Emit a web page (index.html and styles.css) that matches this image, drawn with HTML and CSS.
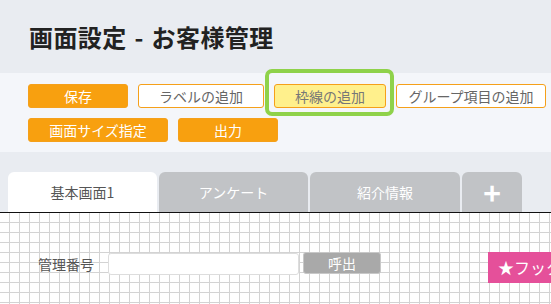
FILE: index.html
```html
<!DOCTYPE html>
<html lang="ja">
<head>
<meta charset="utf-8">
<title>画面設定 - お客様管理</title>
<link rel="stylesheet" href="styles.css">
</head>
<body>
<div class="page">
  <header class="title-bar">
    <h1 class="title">画面設定 - お客様管理</h1>
  </header>
  <section class="toolbar">
    <div class="btn-row">
      <button class="btn btn-solid w-save">保存</button>
      <button class="btn btn-outline w-label">ラベルの追加</button>
      <button class="btn btn-yellow w-frame">枠線の追加<span class="highlight"></span></button>
      <button class="btn btn-outline w-group">グループ項目の追加</button>
    </div>
    <div class="btn-row">
      <button class="btn btn-solid w-size">画面サイズ指定</button>
      <button class="btn btn-solid w-out">出力</button>
    </div>
  </section>
  <nav class="tabs">
    <div class="tab tab-active">基本画面1</div>
    <div class="tab">アンケート</div>
    <div class="tab tab-wide">紹介情報</div>
    <div class="tab tab-add">+</div>
  </nav>
  <main class="canvas">
    <div class="form-row">
      <span class="field-label">管理番号</span>
      <span class="field-input"></span>
      <button class="btn-call">呼出</button>
      <button class="btn-pink">★フッター設定</button>
    </div>
  </main>
</div>
</body>
</html>
```

FILE: styles.css
```css
* { box-sizing: border-box; }
html, body {
  margin: 0;
  padding: 0;
}
body {
  width: 551px;
  height: 304px;
  overflow: hidden;
  font-family: "Noto Sans CJK JP", "Noto Sans", sans-serif;
  background: #ffffff;
}
.page {
  width: 551px;
  display: flex;
  flex-direction: column;
}
.title-bar {
  height: 73px;
  background: #e9ecf1;
  display: flex;
  align-items: center;
  padding-left: 29px;
}
.title {
  margin: 0;
  font-size: 24px;
  font-weight: 700;
  color: #222222;
  line-height: 1;
  letter-spacing: 0.4px;
  word-spacing: 2px;
  white-space: nowrap;
}
.toolbar {
  background: #f4f6fa;
  padding: 11px 0 10px 28px;
  display: flex;
  flex-direction: column;
  gap: 10px;
}
.btn-row {
  display: flex;
  gap: 10px;
  height: 24px;
}
.btn {
  position: relative;
  height: 24px;
  padding: 0;
  font-family: inherit;
  font-size: 14px;
  line-height: 22px;
  border-radius: 3px;
  border: 1px solid #f5a01a;
  text-align: center;
  white-space: nowrap;
  flex-shrink: 0;
}
.btn-solid {
  background: #f8a00f;
  color: #ffffff;
}
.btn-outline {
  background: #ffffff;
  color: #666666;
}
.btn-yellow {
  background: #fff08c;
  color: #777777;
}
.w-save { width: 100px; }
.w-label { width: 126px; }
.w-frame { width: 112px; }
.w-group { width: 150px; }
.w-size { width: 140px; }
.w-out { width: 100px; }
.highlight {
  position: absolute;
  left: -10px;
  top: -16px;
  width: 129px;
  height: 47px;
  border: 4px solid #8fd24a;
  border-radius: 7px;
  pointer-events: none;
}
.tabs {
  background: #e9ecf1;
  padding: 20px 0 0 8px;
  display: flex;
  gap: 2px;
  border-bottom: 1px solid #111111;
}
.tab {
  flex-shrink: 0;
  width: 149px;
  height: 40px;
  background: #c1c3c6;
  color: #ffffff;
  font-size: 14px;
  border-radius: 6px 6px 0 0;
  display: flex;
  align-items: center;
  justify-content: center;
}
.tab-wide { width: 150px; }
.tab-active {
  background: #ffffff;
  color: #555555;
}
.tab-add {
  width: 60px;
  font-size: 30px;
  font-weight: 700;
  line-height: 1;
}
.canvas {
  height: 100px;
  background-color: #ffffff;
  background-image:
    linear-gradient(to right, transparent 9px, #d3d3d3 9px),
    linear-gradient(to bottom, transparent 9px, #d3d3d3 9px);
  background-size: 10px 10px;
  padding-top: 39px;
  overflow: hidden;
}
.form-row {
  display: flex;
  align-items: flex-start;
  padding-left: 38px;
  white-space: nowrap;
}
.form-row > * {
  flex-shrink: 0;
}
.field-label {
  font-size: 14px;
  color: #555555;
  line-height: 22px;
  margin-top: 1px;
  width: 70px;
}
.field-input {
  width: 191px;
  height: 22px;
  margin-top: 1px;
  background: #ffffff;
  border: 1px solid #dddddd;
  border-radius: 3px;
}
.btn-call {
  margin-left: 4px;
  width: 78px;
  height: 22px;
  padding: 0;
  background: #a9a9a9;
  border: 1px solid #c8c8c8;
  border-radius: 3px;
  color: #ffffff;
  font-family: inherit;
  font-size: 14px;
  line-height: 20px;
}
.btn-pink {
  margin-left: 107px;
  height: 31px;
  padding: 0 10px 0 10px;
  background: #e5509a;
  border: none;
  color: #ffffff;
  font-family: inherit;
  font-size: 16px;
  line-height: 31px;
  text-align: left;
}
```
